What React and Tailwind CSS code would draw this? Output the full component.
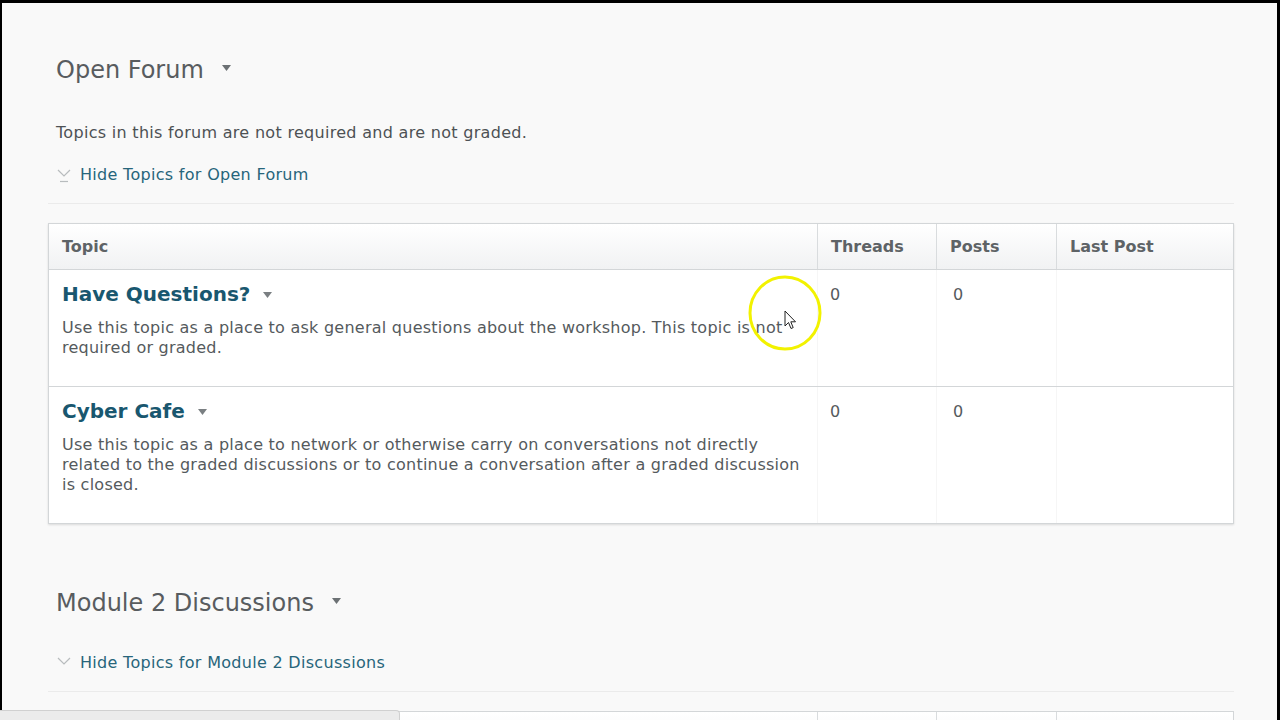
import { useState } from "react";

const font = { fontFamily: '"DejaVu Sans", Verdana, sans-serif' };

const topics = [
  {
    id: 1,
    title: "Have Questions?",
    desc: "Use this topic as a place to ask general questions about the workshop. This topic is not required or graded.",
    threads: 0,
    posts: 0,
  },
  {
    id: 2,
    title: "Cyber Cafe",
    desc: "Use this topic as a place to network or otherwise carry on conversations not directly related to the graded discussions or to continue a conversation after a graded discussion is closed.",
    threads: 0,
    posts: 0,
  },
];

function Caret({ className }) {
  return (
    <svg width="9" height="6" viewBox="0 0 9 6" className={className}>
      <path d="M0 0 L9 0 L4.5 6 Z" fill="currentColor" />
    </svg>
  );
}

function Chevron({ focused }) {
  return (
    <svg width="16" height="18" viewBox="0 0 16 18" className="text-[#b8bcbe]">
      <path d="M2 4 L8 10 L14 4" fill="none" stroke="currentColor" strokeWidth="1.2" />
      {focused && <path d="M4 15.5 L12 15.5" stroke="currentColor" strokeWidth="1.2" />}
    </svg>
  );
}

function TableHeader({ labels = true }) {
  return (
    <div className="grid grid-cols-[768px_119px_120px_1fr] h-[46px] border-b border-[#d3d6d8] bg-gradient-to-b from-white to-[#f1f2f3] text-[16px] font-bold text-[#5e6366]">
      <div className="flex items-center px-[13px]">{labels && "Topic"}</div>
      <div className="flex items-center px-[13px] border-l border-[#d9dcde]">{labels && "Threads"}</div>
      <div className="flex items-center px-[13px] border-l border-[#d9dcde]">{labels && "Posts"}</div>
      <div className="flex items-center px-[13px] border-l border-[#d9dcde]">{labels && "Last Post"}</div>
    </div>
  );
}

function TopicTable({ rows }) {
  return (
    <div className="border border-[#d3d6d8] bg-white shadow-[0_1px_2px_rgba(0,0,0,0.12)]">
      <TableHeader />
      {rows.map((t, i) => (
        <div
          key={t.id}
          className={`grid grid-cols-[768px_119px_120px_1fr] ${i > 0 ? "border-t border-[#d3d6d8]" : ""}`}
        >
          <div className="px-[13px] pt-[12px] pb-[28px]">
            <div className="flex items-center gap-[13px]">
              <span className="text-[20px] font-bold text-[#19576f] leading-[24px]">{t.title}</span>
              <Caret className="text-[#7a7f82] mt-[2px]" />
            </div>
            <p className="mt-[12px] text-[16px] leading-[20px] tracking-[0.25px] text-[#555a5d]">{t.desc}</p>
          </div>
          <div className="px-[12px] pt-[13px] text-[16px] text-[#555a5d] border-l border-[#f6f6f6]">{t.threads}</div>
          <div className="px-[16px] pt-[13px] text-[16px] text-[#555a5d] border-l border-[#f6f6f6]">{t.posts}</div>
          <div className="border-l border-[#f6f6f6]" />
        </div>
      ))}
    </div>
  );
}

function ForumSection({ name, description, rows, focused }) {
  const [open] = useState(true);
  return (
    <section>
      <div className="flex items-center gap-[18px] px-[8px] h-[40px]">
        <h2 className="text-[24px] text-[#585c5f] leading-none">{name}</h2>
        <Caret className="text-[#6c7174] mb-[4px]" />
      </div>
      {description && (
        <p className="mt-[33px] px-[8px] text-[16px] leading-[20px] tracking-[0.3px] text-[#4d5154]">{description}</p>
      )}
      <div className={`${description ? "mt-[22px]" : "mt-[30px]"} flex items-center gap-[8px] px-[8px] text-[16px] leading-[20px] tracking-[0.3px] text-[#27657b]`}>
        <Chevron focused={focused} />
        <span>Hide Topics for {name}</span>
      </div>
      <div className="mt-[18px] border-t border-[#ebebeb]" />
      {open && rows && (
        <div className="mt-[19px]">
          <TopicTable rows={rows} />
        </div>
      )}
    </section>
  );
}

export default function App() {
  return (
    <div className="relative h-[720px] w-[1280px] overflow-hidden bg-black" style={font}>
      <div className="ml-[2px] mt-[3px] mr-[3px] h-[717px] bg-[#f9f9f9] overflow-hidden">
        <div className="pl-[46px] pr-[43px] pt-[47px]">
          <ForumSection
            name="Open Forum"
            description="Topics in this forum are not required and are not graded."
            rows={topics}
            focused
          />
          <div className="mt-[59px]">
            <ForumSection name="Module 2 Discussions" rows={null} />
          </div>
          <div className="mt-[19px] border border-[#d3d6d8] bg-white">
            <TableHeader labels={false} />
          </div>
        </div>
      </div>

      {/* status bar fragment bottom-left */}
      <div className="absolute left-0 bottom-0 w-[400px] h-[10px] bg-[#ebebeb] border-t border-r border-[#d0d0d0] rounded-tr-[4px]" />

      {/* cursor highlight */}
      <svg className="absolute left-[745px] top-[273px]" width="80" height="80" viewBox="0 0 80 80">
        <ellipse cx="40" cy="40" rx="35" ry="36" fill="none" stroke="#f2f200" strokeWidth="3" />
      </svg>
      <svg className="absolute left-[784px] top-[310px]" width="14" height="22" viewBox="0 0 14 22">
        <path d="M1 1 L1 16 L4.5 12.5 L7 18.5 L9.2 17.6 L6.8 11.8 L11.5 11.8 Z" fill="#fff" stroke="#222" strokeWidth="1" strokeLinejoin="round" />
      </svg>
    </div>
  );
}
